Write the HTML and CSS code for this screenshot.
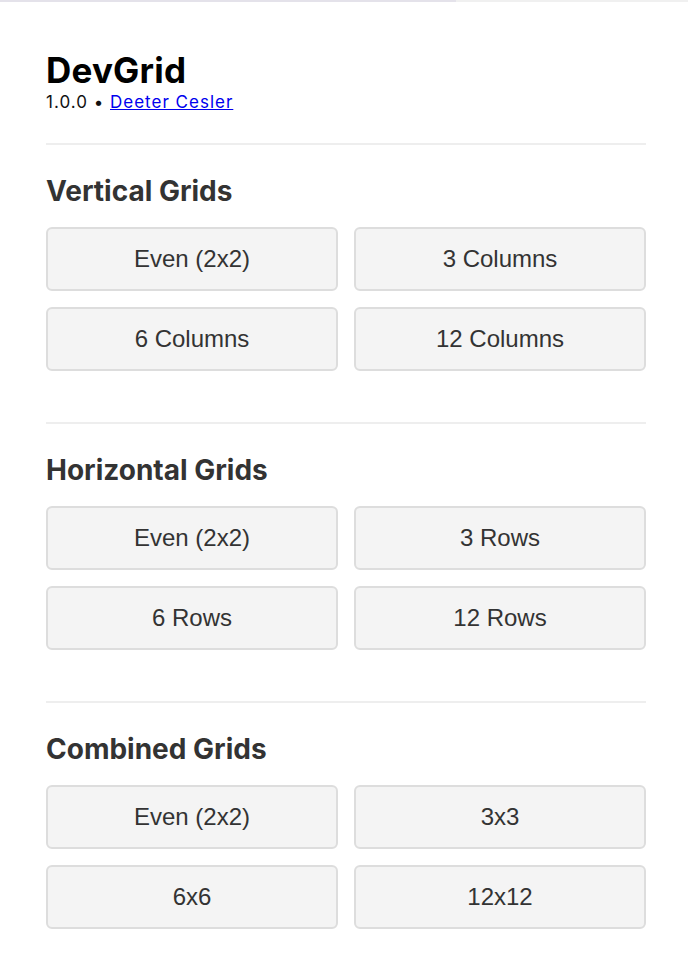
FILE: index.html
```html
<!DOCTYPE html>
<html>
<head>
<meta charset="utf-8">
<link rel="stylesheet" href="styles.css">
</head>
<body>
<div class="topbar"><div class="topbar-fill"></div></div>
<main class="page">
  <header class="header">
    <h1 class="title">DevGrid</h1>
    <div class="meta">1.0.0 • <a href="#" class="author">Deeter Cesler</a></div>
  </header>
  <section class="section">
    <h2 class="section-title">Vertical Grids</h2>
    <div class="grid">
      <button class="btn">Even (2x2)</button>
      <button class="btn">3 Columns</button>
      <button class="btn">6 Columns</button>
      <button class="btn">12 Columns</button>
    </div>
  </section>
  <section class="section">
    <h2 class="section-title">Horizontal Grids</h2>
    <div class="grid">
      <button class="btn">Even (2x2)</button>
      <button class="btn">3 Rows</button>
      <button class="btn">6 Rows</button>
      <button class="btn">12 Rows</button>
    </div>
  </section>
  <section class="section">
    <h2 class="section-title">Combined Grids</h2>
    <div class="grid">
      <button class="btn">Even (2x2)</button>
      <button class="btn">3x3</button>
      <button class="btn">6x6</button>
      <button class="btn">12x12</button>
    </div>
  </section>
</main>
</body>
</html>
```
FILE: styles.css
```css
html, body {
  margin: 0;
  padding: 0;
  background: #fff;
}
body {
  font-family: Inter, "Liberation Sans", sans-serif;
}
.topbar {
  height: 2px;
  background: #f0f0f0;
  display: flex;
}
.topbar-fill {
  width: 456px;
  height: 2px;
  background: #e4e2ea;
}
.page {
  width: 600px;
  padding: 0 42px 0 46px;
}
.header {
  padding-top: 49px;
  padding-bottom: 31px;
}
.title {
  margin: 0;
  font-size: 35px;
  line-height: 38px;
  font-weight: 700;
  color: #000;
  letter-spacing: 0.2px;
}
.meta {
  font-size: 17px;
  line-height: 20px;
  color: #111;
  margin-top: 3px;
  letter-spacing: 1px;
}
.author {
  color: #0000ee;
  text-decoration: underline;
}
.section {
  border-top: 2px solid #eeeeee;
  padding-top: 31px;
  padding-bottom: 51px;
}
.section-title {
  margin: 0 0 21px 0;
  font-size: 28px;
  line-height: 30px;
  font-weight: 700;
  color: #333;
}
.grid {
  display: grid;
  grid-template-columns: 1fr 1fr;
  gap: 16px;
}
.btn {
  height: 64px;
  box-sizing: border-box;
  border: 2px solid #dddddd;
  border-radius: 6px;
  background: #f4f4f4;
  color: #333;
  font-family: "Liberation Sans", Arial, sans-serif;
  font-size: 24px;
  padding: 0;
}
```
